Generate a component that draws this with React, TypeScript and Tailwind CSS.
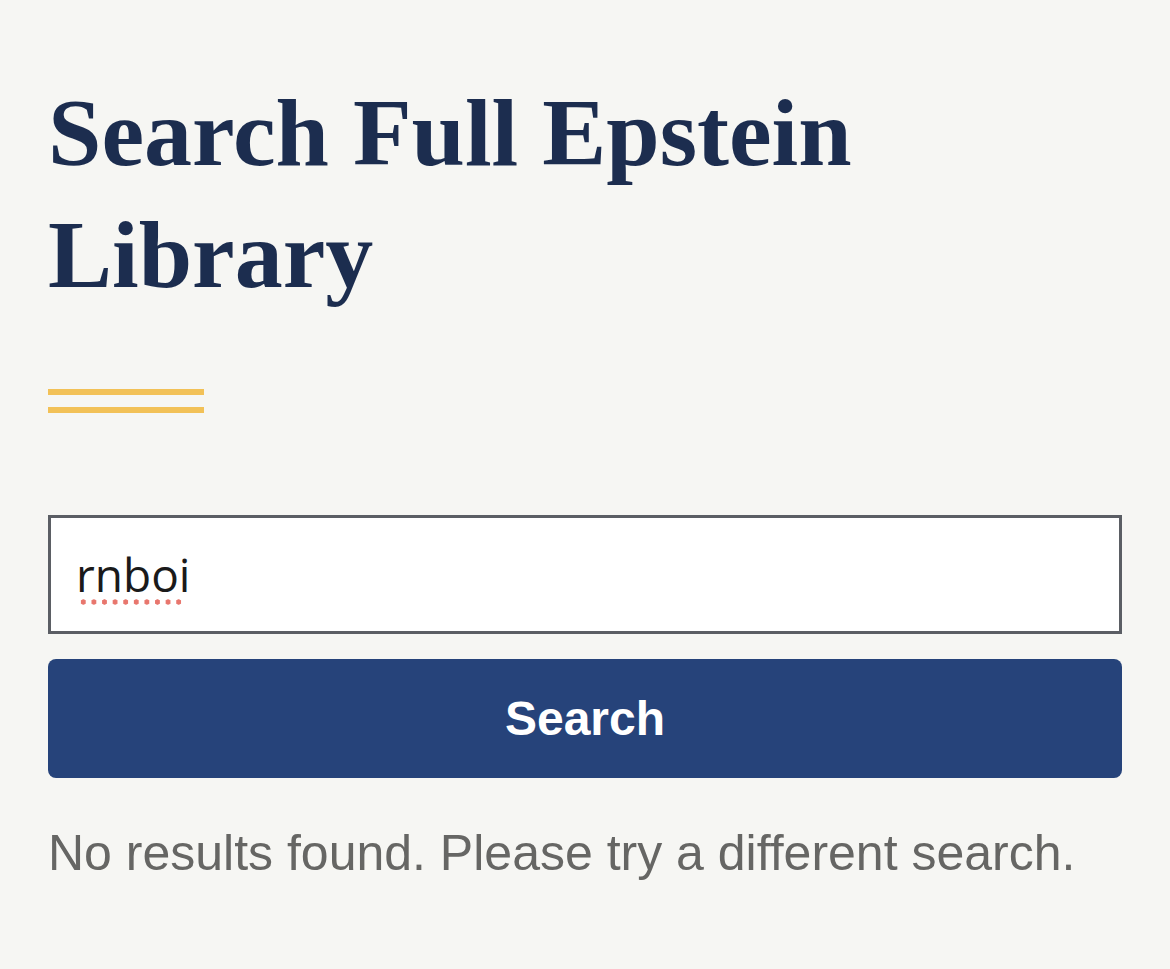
export default function App() {
  return (
    <main className="min-h-screen w-full bg-[#f6f6f3] px-12 pt-[72px]">
      <h1 className="font-['Liberation_Serif',serif] text-[96px] leading-[122px] font-bold text-[#1c2d4f]">
        Search Full Epstein Library
      </h1>

      <div className="mt-[73px] flex w-[156px] flex-col gap-3">
        <div className="h-[6px] bg-[#f2c157]" />
        <div className="h-[6px] bg-[#f2c157]" />
      </div>

      <div className="mt-[102px] flex h-[119px] items-center border-[3px] border-[#5b5e64] bg-white pl-[25px]">
        <span className="relative font-['Open_Sans',sans-serif] text-[46px] text-[#1a1a1a]">
          rnboi
          <span className="absolute left-[2px] w-[106px] bottom-[4px] h-[6px] bg-[radial-gradient(circle,#e8766d_2.4px,transparent_2.9px)] bg-[length:10.6px_6px]" />
        </span>
      </div>

      <button
        type="button"
        className="mt-[25px] flex h-[119px] w-full items-center justify-center rounded-lg bg-[#26437a] font-['Liberation_Sans',sans-serif] text-[48px] font-bold text-white"
      >
        Search
      </button>

      <p className="mt-[38px] font-['Liberation_Sans',sans-serif] text-[50px] text-[#666664]">
        No results found. Please try a different search.
      </p>
    </main>
  );
}
